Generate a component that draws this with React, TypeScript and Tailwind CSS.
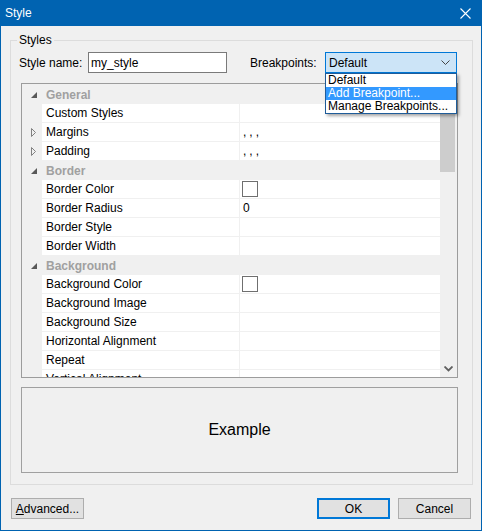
import React from 'react'

type Row =
    | { kind: 'cat'; label: string }
    | { kind: 'prop'; label: string; value?: 'commas' | 'box' | string; collapsed?: boolean }

const rows: Row[] = [
    { kind: 'cat', label: 'General' },
    { kind: 'prop', label: 'Custom Styles' },
    { kind: 'prop', label: 'Margins', value: 'commas', collapsed: true },
    { kind: 'prop', label: 'Padding', value: 'commas', collapsed: true },
    { kind: 'cat', label: 'Border' },
    { kind: 'prop', label: 'Border Color', value: 'box' },
    { kind: 'prop', label: 'Border Radius', value: '0' },
    { kind: 'prop', label: 'Border Style' },
    { kind: 'prop', label: 'Border Width' },
    { kind: 'cat', label: 'Background' },
    { kind: 'prop', label: 'Background Color', value: 'box' },
    { kind: 'prop', label: 'Background Image' },
    { kind: 'prop', label: 'Background Size' },
    { kind: 'prop', label: 'Horizontal Alignment' },
    { kind: 'prop', label: 'Repeat' },
    { kind: 'prop', label: 'Vertical Alignment' },
]

const ExpandedGlyph = () => (
    <svg width="6" height="6" viewBox="0 0 6 6">
        <polygon points="6,0 6,6 0,6" fill="#595959" />
    </svg>
)

const CollapsedGlyph = () => (
    <svg width="5" height="9" viewBox="0 0 5 9">
        <polygon points="0.5,0.5 4.5,4.5 0.5,8.5" fill="none" stroke="#818181" strokeWidth="1" />
    </svg>
)

const Chevron = ({ color = '#444' }: { color?: string }) => (
    <svg width="9" height="5" viewBox="0 0 9 5">
        <polyline points="0.5,0.5 4.5,4.5 8.5,0.5" fill="none" stroke={color} strokeWidth="1" />
    </svg>
)

const GridRow = ({ row }: { row: Row }) => {
    if (row.kind === 'cat') {
        return (
            <div className="flex h-[19px] bg-[#f0f0f0] shrink-0">
                <div className="w-[20px] flex items-center justify-center pl-[3px]">
                    <ExpandedGlyph />
                </div>
                <div className="pl-[4px] flex items-center font-bold text-[#a0a0a0]">{row.label}</div>
            </div>
        )
    }
    return (
        <div className="flex h-[19px] shrink-0">
            <div className="w-[20px] bg-[#f0f0f0] flex items-center justify-center pl-[3px]">
                {row.collapsed && <CollapsedGlyph />}
            </div>
            <div className="w-[198px] pl-[4px] flex items-center border-r border-b border-[#f0f0f0] bg-white">
                {row.label}
            </div>
            <div className="flex-1 flex items-center pl-[3px] border-b border-[#f0f0f0] bg-white">
                {row.value === 'commas' && <span className="tracking-[3px]">,,,</span>}
                {row.value === 'box' && <div className="w-[16px] h-[16px] border border-[#6f6f6f] bg-white -ml-[1px]" />}
                {row.value && row.value !== 'commas' && row.value !== 'box' && <span>{row.value}</span>}
            </div>
        </div>
    )
}

export default function App() {
    return (
        <div
            className="w-[482px] h-[531px] flex flex-col bg-[#f0f0f0] border-x border-b border-[#0063b1] text-[12px] text-black overflow-hidden"
            style={{ fontFamily: '"Liberation Sans", Arial, sans-serif' }}
        >
            {/* title bar */}
            <div className="h-[26px] shrink-0 bg-[#0063b1] flex items-center justify-between pl-[4px] pr-[10px] text-white">
                <span>Style</span>
                <svg width="11" height="11" viewBox="0 0 11 11">
                    <path d="M0.5 0.5L10.5 10.5M10.5 0.5L0.5 10.5" stroke="#fff" strokeWidth="1.1" />
                </svg>
            </div>

            <fieldset className="ml-[9px] mr-[8px] mt-[6px] border border-[#dcdcdc] p-0">
                <legend className="ml-[6px] px-[2px] leading-4">Styles</legend>
                <div className="pl-[8px] pr-[14px] pt-[4px] pb-[11px] flex flex-col">
                    <div className="flex items-center h-[21px]">
                        <span className="w-[69px]">Style name:</span>
                        <div className="w-[139px] h-[21px] border border-[#7a7a7a] bg-white flex items-center pl-[2px]">my_style</div>
                        <span className="ml-[23px] w-[75px]">Breakpoints:</span>
                        <div className="relative w-[132px] h-[21px]">
                            <div className="h-full border border-[#0078d7] bg-[#cce4f7] flex items-center justify-between pl-[3px] pr-[6px]">
                                <span>Default</span>
                                <Chevron />
                            </div>
                            <div className="absolute left-0 top-full w-full z-10 border border-[#1f5c99] bg-white shadow-[2px_2px_3px_rgba(0,0,0,0.35)] leading-[13px]">
                                <div className="pl-[2px] h-[13px]">Default</div>
                                <div className="pl-[2px] h-[13px] bg-[#3399ff] text-white">Add Breakpoint...</div>
                                <div className="pl-[2px] h-[13px]">Manage Breakpoints...</div>
                            </div>
                        </div>
                    </div>

                    {/* property grid */}
                    <div className="ml-[2px] mt-[10px] w-[437px] h-[295px] border border-[#9c9c9c] flex bg-[#f0f0f0]">
                        <div className="flex-1 flex flex-col pt-[1px] overflow-hidden">
                            {rows.map((r) => (
                                <GridRow key={r.label} row={r} />
                            ))}
                        </div>
                        <div className="w-[17px] flex flex-col bg-[#f0f0f0]">
                            <div className="h-[17px] flex items-center justify-center rotate-180">
                                <Chevron color="#606060" />
                            </div>
                            <div className="h-[71px] w-[15px] bg-[#cdcdcd]" />
                            <div className="flex-1" />
                            <div className="h-[17px] flex items-center justify-center">
                                <svg width="9" height="6" viewBox="0 0 9 6">
                                    <polyline points="0.5,0.5 4.5,4.5 8.5,0.5" fill="none" stroke="#606060" strokeWidth="1.8" />
                                </svg>
                            </div>
                        </div>
                    </div>

                    {/* preview */}
                    <div className="ml-[2px] mt-[9px] w-[437px] h-[86px] border border-[#a0a0a0] flex items-center justify-center text-[16px]">
                        Example
                    </div>
                </div>
            </fieldset>

            <div className="mt-[13px] flex px-[10px]">
                <button className="w-[73px] h-[21px] bg-[#e1e1e1] border border-[#adadad]">
                    <span className="underline">A</span>dvanced...
                </button>
                <div className="flex-1" />
                <button className="w-[73px] h-[21px] bg-[#e1e1e1] border-2 border-[#0078d7]">OK</button>
                <button className="ml-[8px] w-[73px] h-[21px] bg-[#e1e1e1] border border-[#adadad]">Cancel</button>
            </div>
        </div>
    )
}
